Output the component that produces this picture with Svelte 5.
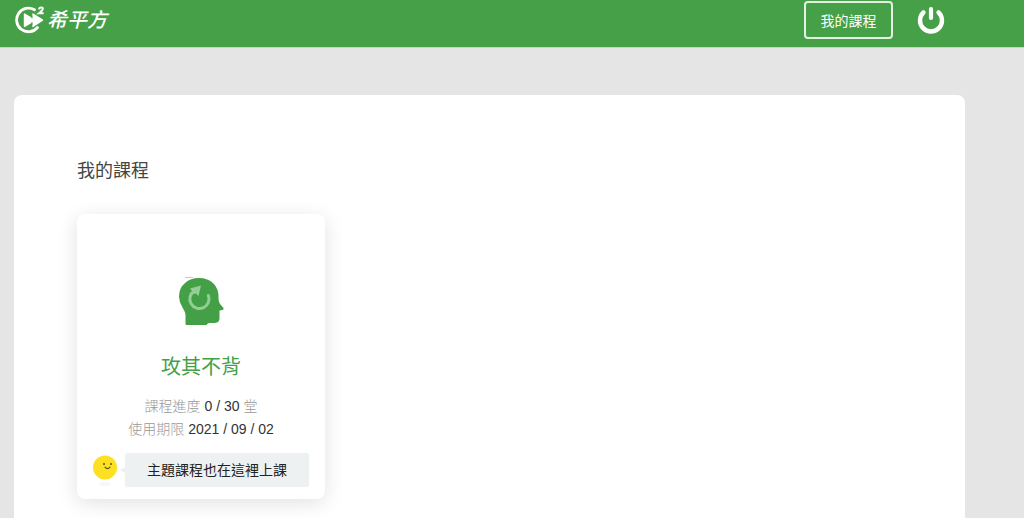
<script>
  const courses = [
    {
      title: '攻其不背',
      finished: 0,
      total: 30,
      expires: '2021 / 09 / 02',
      note: '主題課程也在這裡上課'
    }
  ];
</script>

<div class="page">
  <header class="navbar">
    <div class="navbar-inner">
      <a class="logo" href="#home">
        <svg class="logo-mark" viewBox="0 0 31 28" aria-hidden="true">
          <path d="M20.5 3.8 A11.8 11.8 0 1 0 23.5 21.5" fill="none" stroke="#fff" stroke-width="2.8" stroke-linecap="round" />
          <path d="M10.5 8 L19 13 V8 L28.5 14.2 L19 20.5 V15.5 L10.5 20.5 Z" fill="#fff" stroke="#fff" stroke-width="1.4" stroke-linejoin="round" />
          <path d="M18 9.5 V12.4 M18 16 V19" stroke="#45a047" stroke-width="0.8" />
          <path d="M25 3.4 Q25.2 1.4 27.2 1.4 Q29 1.4 28.8 3 Q28.6 4.4 25 7.2 H29.6" fill="none" stroke="#fff" stroke-width="2" />
        </svg>
        <span class="logo-name">希平方</span>
      </a>

      <nav class="actions">
        <button class="my-courses" type="button">我的課程</button>
        <button class="power" type="button" aria-label="登出">
          <svg viewBox="0 0 28 28" aria-hidden="true">
            <path d="M6.5 6.4 A11 11 0 1 0 21.5 6.4" fill="none" stroke="#fff" stroke-width="4.4" stroke-linecap="round" />
            <path d="M14 3 V12" stroke="#fff" stroke-width="4.2" stroke-linecap="round" />
          </svg>
        </button>
      </nav>
    </div>
  </header>

  <main class="panel">
    <h1>我的課程</h1>

    <div class="course-list">
      {#each courses as course}
        <article class="course">
          <svg class="course-icon" viewBox="0 0 48 50" aria-hidden="true">
            <path d="M8 1.5 H16" stroke="#c5cbd0" stroke-width="1" />
            <path d="M8.5 48 V39 Q8.5 36.5 5.5 31.5 Q2 26 2 20.5 Q2 12 8 7 Q13.5 2 22 2 Q31 2 36.5 7.5 Q42 13 41.5 22 Q41.3 25 43 28 L46.5 32 Q47 33.5 45.5 34 L42.5 34.6 V42 Q42.5 46.8 38 47 H32.5 Q30.5 47.2 29.5 49 H9.5 Q8.5 49 8.5 48 Z" fill="#43a047" />
            <path d="M17 15 A9.6 9.6 0 1 0 31.4 19.5" fill="none" stroke="#94ce96" stroke-width="3" stroke-linecap="round" />
            <path d="M13 12.5 L24 9.5 L21.5 20 L19 17.5 L16 18 L15.5 15.5 Z" fill="#94ce96" />
          </svg>
          <h2>{course.title}</h2>
          <p>課程進度 <b>{course.finished} / {course.total}</b> 堂</p>
          <p>使用期限 <b>{course.expires}</b></p>

          <div class="note">
            <svg class="face" viewBox="0 0 26 34" aria-hidden="true">
              <ellipse cx="12" cy="31" rx="6" ry="2" fill="#f7f7f7" />
              <circle cx="12" cy="14.5" r="12" fill="#fde021" />
              <circle cx="11" cy="11" r="1" fill="#5d5219" />
              <circle cx="18" cy="11" r="1" fill="#5d5219" />
              <path d="M12 14.2 Q14.5 17.2 17 14.2" fill="none" stroke="#5d5219" stroke-width="1.2" stroke-linecap="round" />
            </svg>
            <div class="bubble">{course.note}</div>
          </div>
        </article>
      {/each}
    </div>
  </main>
</div>

<style>
  :global(body) {
    background: #e5e5e5;
  }

  .page {
    font-family: "Liberation Sans", "Noto Sans CJK TC", sans-serif;
    color: #444;
  }

  .navbar {
    background: #45a047;
    border-bottom: 1px solid #b9dbba;
  }

  .navbar-inner {
    display: flex;
    align-items: flex-start;
    justify-content: space-between;
    height: 47px;
    padding: 0 79px 0 14px;
  }

  .logo {
    display: flex;
    align-items: center;
    gap: 2px;
    height: 40px;
    color: #fff;
    text-decoration: none;
  }

  .logo-mark {
    width: 31px;
    height: 28px;
  }

  .logo-name {
    font-size: 20px;
    line-height: 24px;
    font-style: italic;
    font-weight: 500;
  }

  .actions {
    display: flex;
    align-items: center;
    gap: 24px;
    height: 40px;
  }

  .my-courses {
    width: 89px;
    height: 38px;
    padding: 0;
    border: 2px solid #e3f2e3;
    border-radius: 4px;
    background: none;
    color: #fff;
    font-family: inherit;
    font-size: 14px;
    cursor: pointer;
  }

  .power {
    padding: 0;
    border: 0;
    background: none;
    cursor: pointer;
  }

  .power svg {
    display: block;
    width: 28px;
    height: 28px;
  }

  .panel {
    margin: 47px 59px 0 14px;
    padding: 64px 63px;
    border-radius: 8px;
    background: #fff;
  }

  h1 {
    margin: 0 0 31px;
    font-size: 18px;
    line-height: 24px;
    font-weight: 400;
  }

  .course-list {
    display: flex;
    flex-wrap: wrap;
    gap: 32px;
  }

  .course {
    display: flex;
    flex-direction: column;
    align-items: center;
    box-sizing: border-box;
    width: 248px;
    padding: 62px 16px 12px;
    border-radius: 8px;
    background: #fff;
    box-shadow: 0 4px 20px rgba(0, 0, 0, 0.12);
  }

  .course-icon {
    width: 48px;
    height: 50px;
  }

  h2 {
    margin: 27px 0 14px;
    color: #43a047;
    font-size: 20px;
    line-height: 28px;
    font-weight: 400;
  }

  p {
    margin: 0;
    color: #999;
    font-size: 14px;
    line-height: 23px;
    font-weight: 300;
  }

  p b {
    color: #333;
    font-weight: 400;
  }

  .note {
    display: flex;
    align-items: center;
    align-self: stretch;
    gap: 6px;
    margin-top: 12px;
  }

  .face {
    width: 26px;
    height: 34px;
  }

  .bubble {
    position: relative;
    flex: 1;
    border-radius: 2px;
    background: #edf1f2;
    color: #222;
    font-size: 14px;
    line-height: 34px;
    text-align: center;
  }

  .bubble::before {
    content: "";
    position: absolute;
    top: 14px;
    right: 100%;
    border: 3px solid transparent;
    border-right: 5px solid #edf1f2;
    border-left: 0;
  }
</style>
